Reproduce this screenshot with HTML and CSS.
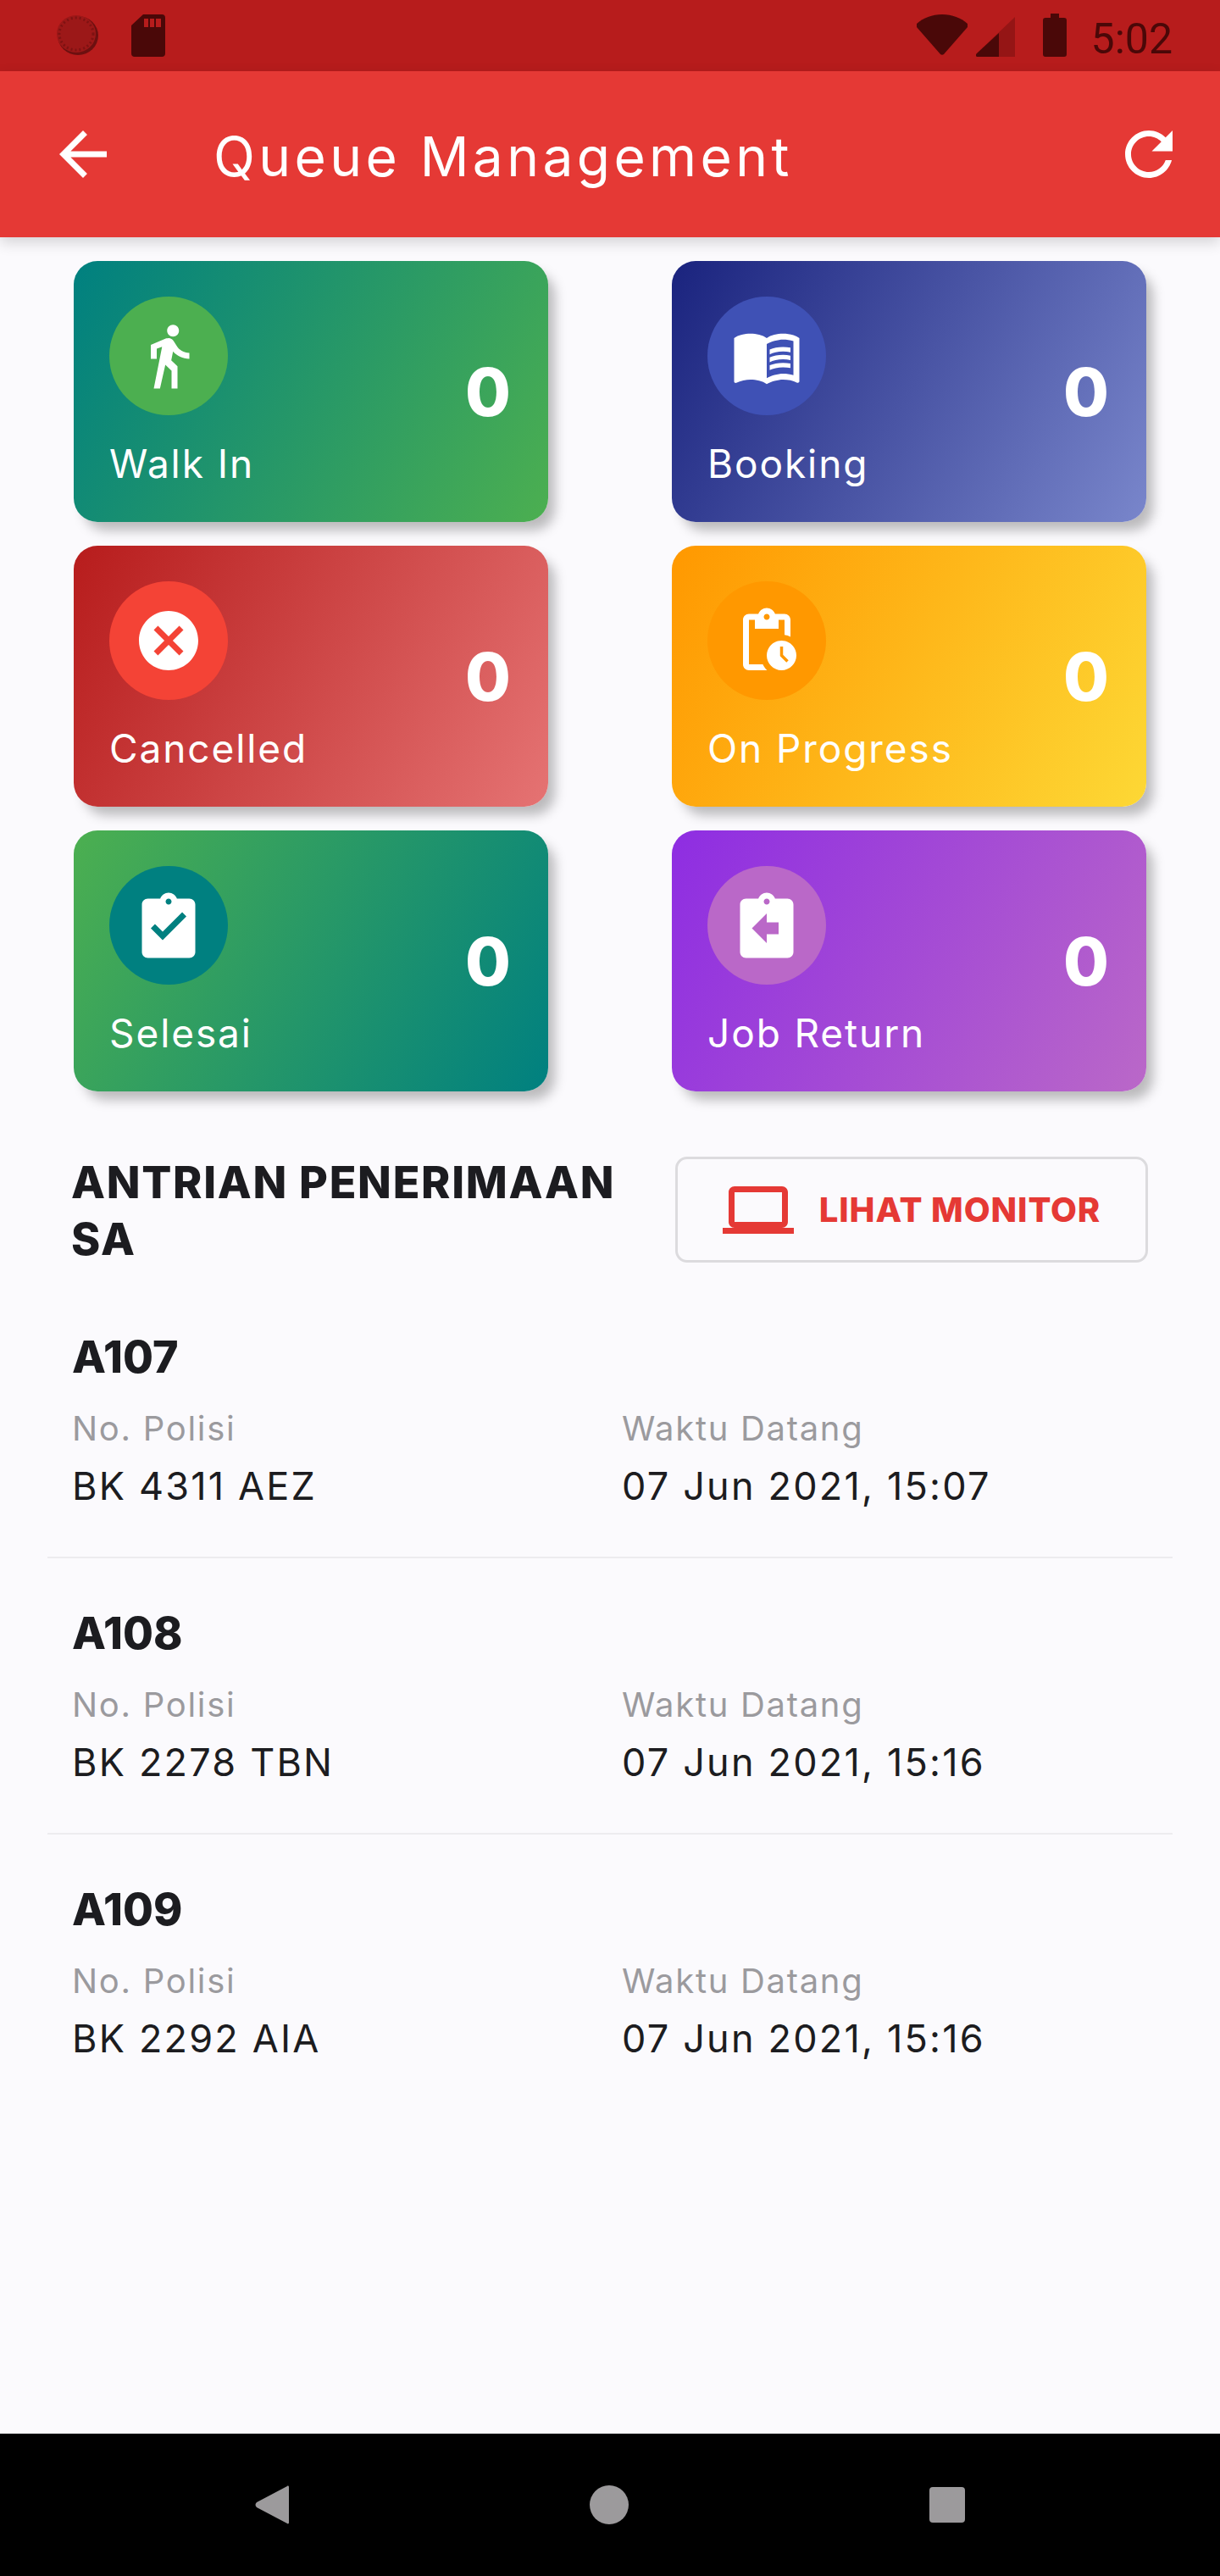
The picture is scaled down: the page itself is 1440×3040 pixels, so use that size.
FILE: index.html
```html
<!DOCTYPE html>
<html lang="en">
<head>
    <meta charset="UTF-8">
    <meta name="viewport" content="width=device-width, initial-scale=1.0">
    <title>Queue Management</title>
    <link rel="stylesheet" href="styles.css">
</head>
<body>
    <div class="screen">
        <div class="status-bar">
            <div class="status-left">
                <svg class="status-dot" viewBox="0 0 50 48"><ellipse cx="26" cy="25" rx="24" ry="23" fill="#6d1010"/><ellipse cx="24" cy="23" rx="23" ry="22" fill="#9c1818"/><ellipse cx="24" cy="23" rx="20" ry="19" fill="none" stroke="#7e1212" stroke-width="3" stroke-dasharray="2 3"/></svg>
                <svg class="status-sd" viewBox="0 0 40 50"><path fill-rule="evenodd" d="M14 0H36a4 4 0 0 1 4 4V46a4 4 0 0 1-4 4H4a4 4 0 0 1-4-4V13ZM15 5V15H20V5ZM22 5V15H27V5ZM29 5V15H35V5Z"/></svg>
            </div>
            <div class="status-right">
                <svg class="status-wifi" viewBox="0 0 60 48"><path d="M30 0C18 0 8 4 0 11c-1 1-1 2 0 4L28 47c1 1 3 1 4 0L60 15c1-2 1-3 0-4C52 4 42 0 30 0Z"/></svg>
                <svg class="status-signal" viewBox="0 0 46 47"><path d="M46 0V47H2c-2 0-3-2-1-4Z" opacity=".3"/><path d="M27 19V47H2c-2 0-3-2-1-4Z"/></svg>
                <svg class="status-battery" viewBox="0 0 28 51"><path d="M9 0H19V5H25a3 3 0 0 1 3 3V48a3 3 0 0 1-3 3H3a3 3 0 0 1-3-3V8a3 3 0 0 1 3-3H9Z"/></svg>
                <span class="status-time">5:02</span>
            </div>
        </div>

        <header class="app-bar">
            <svg class="bar-icon" viewBox="0 0 24 24"><path d="M20 11H7.83l5.59-5.59L12 4l-8 8 8 8 1.41-1.41L7.83 13H20v-2z"/></svg>
            <h1 class="bar-title">Queue Management</h1>
            <svg class="bar-icon" viewBox="0 0 24 24"><path d="M17.65 6.35C16.2 4.9 14.21 4 12 4c-4.42 0-7.99 3.58-7.99 8s3.57 8 7.99 8c3.73 0 6.84-2.55 7.73-6h-2.08c-.82 2.33-3.04 4-5.65 4-3.31 0-6-2.69-6-6s2.69-6 6-6c1.66 0 3.14.69 4.22 1.78L13 11h7V4l-2.35 2.35z"/></svg>
        </header>

        <main class="content">
            <section class="cards">
                <div class="card card-walk">
                    <div class="card-top">
                        <span class="card-circle">
                            <svg class="card-icon" viewBox="0 0 24 24"><path d="M13.5 5.5c1.1 0 2-.9 2-2s-.9-2-2-2-2 .9-2 2 .9 2 2 2zM9.8 8.9L7 23h2.1l1.8-8 2.1 2v6h2v-7.5l-2.1-2 .6-3C14.8 12 16.8 13 19 13v-2c-1.9 0-3.5-1-4.3-2.4l-1-1.6c-.4-.6-1-1-1.7-1-.3 0-.5.1-.8.1L6 8.3V13h2V9.6l1.8-.7"/></svg>
                        </span>
                        <span class="card-count">0</span>
                    </div>
                    <div class="card-label">Walk In</div>
                </div>
                <div class="card card-booking">
                    <div class="card-top">
                        <span class="card-circle">
                            <svg class="card-icon" viewBox="0 0 24 24"><path d="M21 5c-1.11-.35-2.33-.5-3.5-.5-1.95 0-4.05.4-5.5 1.5-1.45-1.1-3.55-1.5-5.5-1.5S2.45 4.9 1 6v14.65c0 .25.25.5.5.5.1 0 .15-.05.25-.05C3.1 20.45 5.05 20 6.5 20c1.95 0 4.05.4 5.5 1.5 1.35-.85 3.8-1.5 5.5-1.5 1.65 0 3.35.3 4.75 1.05.1.05.15.05.25.05.25 0 .5-.25.5-.5V6c-.6-.45-1.25-.75-2-1zm0 13.5c-1.1-.35-2.3-.5-3.5-.5-1.7 0-4.15.65-5.5 1.5V8c1.35-.85 3.8-1.5 5.5-1.5 1.2 0 2.4.15 3.5.5v11.5z"/><path d="M17.5 10.5c.88 0 1.73.09 2.5.26V9.24c-.79-.15-1.64-.24-2.5-.24-1.7 0-3.24.29-4.5.83v1.66c1.13-.64 2.7-.99 4.5-.99zM13 12.49v1.66c1.13-.64 2.7-.99 4.5-.99.88 0 1.73.09 2.5.26V11.9c-.79-.15-1.64-.24-2.5-.24-1.7 0-3.24.3-4.5.83zM17.5 14.33c-1.7 0-3.24.29-4.5.83v1.66c1.13-.64 2.7-.99 4.5-.99.88 0 1.73.09 2.5.26v-1.52c-.79-.16-1.64-.24-2.5-.24z"/></svg>
                        </span>
                        <span class="card-count">0</span>
                    </div>
                    <div class="card-label">Booking</div>
                </div>
                <div class="card card-cancelled">
                    <div class="card-top">
                        <span class="card-circle">
                            <svg class="card-icon" viewBox="0 0 24 24"><path d="M12 2C6.47 2 2 6.47 2 12s4.47 10 10 10 10-4.47 10-10S17.53 2 12 2zm5 13.59L15.59 17 12 13.41 8.41 17 7 15.59 10.59 12 7 8.41 8.41 7 12 10.59 15.59 7 17 8.41 13.41 12 17 15.59z"/></svg>
                        </span>
                        <span class="card-count">0</span>
                    </div>
                    <div class="card-label">Cancelled</div>
                </div>
                <div class="card card-progress">
                    <div class="card-top">
                        <span class="card-circle">
                            <svg class="card-icon" viewBox="0 0 24 24"><path d="M17 12c-2.76 0-5 2.24-5 5s2.24 5 5 5 5-2.24 5-5-2.24-5-5-5zm1.65 7.35L16.5 17.2V14h1v2.79l1.85 1.85-.7.71zM18 3h-3.18C14.4 1.84 13.3 1 12 1s-2.4.84-2.82 2H6c-1.1 0-2 .9-2 2v15c0 1.1.9 2 2 2h6.11c-.59-.57-1.07-1.25-1.42-2H6V5h2v3h8V5h2v5.08c.71.1 1.38.31 2 .6V5c0-1.1-.9-2-2-2zm-6 2c-.55 0-1-.45-1-1s.45-1 1-1 1 .45 1 1-.45 1-1 1z"/></svg>
                        </span>
                        <span class="card-count">0</span>
                    </div>
                    <div class="card-label">On Progress</div>
                </div>
                <div class="card card-done">
                    <div class="card-top">
                        <span class="card-circle">
                            <svg class="card-icon" viewBox="0 0 24 24"><path d="M19 3h-4.18C14.4 1.84 13.3 1 12 1s-2.4.84-2.82 2H5c-1.1 0-2 .9-2 2v16c0 1.1.9 2 2 2h14c1.1 0 2-.9 2-2V5c0-1.1-.9-2-2-2zm-7 0c.55 0 1 .45 1 1s-.45 1-1 1-1-.45-1-1 .45-1 1-1zm-2 14l-4-4 1.41-1.41L10 14.17l6.59-6.59L18 9l-8 8z"/></svg>
                        </span>
                        <span class="card-count">0</span>
                    </div>
                    <div class="card-label">Selesai</div>
                </div>
                <div class="card card-return">
                    <div class="card-top">
                        <span class="card-circle">
                            <svg class="card-icon" viewBox="0 0 24 24"><path d="M19 3h-4.18C14.4 1.84 13.3 1 12 1s-2.4.84-2.82 2H5c-1.1 0-2 .9-2 2v16c0 1.1.9 2 2 2h14c1.1 0 2-.9 2-2V5c0-1.1-.9-2-2-2zm-7 0c.55 0 1 .45 1 1s-.45 1-1 1-1-.45-1-1 .45-1 1-1zm4 12h-4v3l-5-5 5-5v3h4v4z"/></svg>
                        </span>
                        <span class="card-count">0</span>
                    </div>
                    <div class="card-label">Job Return</div>
                </div>
            </section>

            <section class="queue-head">
                <h2 class="queue-title">ANTRIAN PENERIMAAN SA</h2>
                <button class="monitor-btn">
                    <svg class="monitor-icon" viewBox="0 0 24 24"><path d="M20 18c1.1 0 1.99-.9 1.99-2L22 6c0-1.1-.9-2-2-2H4c-1.1 0-2 .9-2 2v10c0 1.1.9 2 2 2H0v2h24v-2h-4zM4 6h16v10H4V6z"/></svg>
                    LIHAT MONITOR
                </button>
            </section>

            <section class="queue-list">
                <div class="queue-item">
                    <div class="queue-no">A107</div>
                    <div class="queue-cols">
                        <div>
                            <div class="queue-label">No. Polisi</div>
                            <div class="queue-value">BK 4311 AEZ</div>
                        </div>
                        <div>
                            <div class="queue-label">Waktu Datang</div>
                            <div class="queue-value">07 Jun 2021, 15:07</div>
                        </div>
                    </div>
                </div>
                <div class="queue-item">
                    <div class="queue-no">A108</div>
                    <div class="queue-cols">
                        <div>
                            <div class="queue-label">No. Polisi</div>
                            <div class="queue-value">BK 2278 TBN</div>
                        </div>
                        <div>
                            <div class="queue-label">Waktu Datang</div>
                            <div class="queue-value">07 Jun 2021, 15:16</div>
                        </div>
                    </div>
                </div>
                <div class="queue-item">
                    <div class="queue-no">A109</div>
                    <div class="queue-cols">
                        <div>
                            <div class="queue-label">No. Polisi</div>
                            <div class="queue-value">BK 2292 AIA</div>
                        </div>
                        <div>
                            <div class="queue-label">Waktu Datang</div>
                            <div class="queue-value">07 Jun 2021, 15:16</div>
                        </div>
                    </div>
                </div>
            </section>
        </main>

        <nav class="nav-bar">
            <svg class="nav-back" viewBox="0 0 40 46"><path d="M38 1c1-1 2 0 2 1V44c0 1-1 2-2 1L2 26c-2-2-2-4 0-6Z"/></svg>
            <span class="nav-home"></span>
            <span class="nav-recent"></span>
        </nav>
    </div>
</body>
</html>
```

FILE: styles.css
```css
* {
    box-sizing: border-box;
}

html, body {
    margin: 0;
    padding: 0;
}

body {
    font-family: Inter, Arial, sans-serif;
    background-color: #fbfafd;
}

.screen {
    width: 1440px;
    height: 3040px;
    display: flex;
    flex-direction: column;
    overflow: hidden;
}

/* status bar */
.status-bar {
    height: 84px;
    flex-shrink: 0;
    background-color: #b71c1c;
    display: flex;
    justify-content: space-between;
    color: #4a0808;
    fill: #4a0808;
}

.status-left {
    display: flex;
    align-items: flex-start;
    padding: 17px 0 0 66px;
}

.status-dot {
    width: 50px;
    height: 48px;
}

.status-sd {
    width: 40px;
    height: 50px;
    margin-left: 39px;
}

.status-right {
    display: flex;
    align-items: flex-start;
    padding: 16px 56px 0 0;
}

.status-wifi {
    width: 60px;
    height: 48px;
    margin-top: 1px;
}

.status-signal {
    width: 46px;
    height: 47px;
    margin: 4px 0 0 10px;
}

.status-battery {
    width: 28px;
    height: 51px;
    margin-left: 33px;
}

.status-time {
    font-family: Roboto, Arial, sans-serif;
    font-size: 50px;
    line-height: 50px;
    margin: 5px 0 0 29px;
}

/* app bar */
.app-bar {
    height: 196px;
    flex-shrink: 0;
    background-color: #e53935;
    color: #fff;
    fill: #fff;
    display: flex;
    align-items: center;
    padding: 0 42px 0 56px;
    box-shadow: 0 6px 16px rgba(0, 0, 0, 0.16);
    position: relative;
}

.bar-icon {
    width: 84px;
    height: 84px;
    flex-shrink: 0;
}

.bar-title {
    flex: 1;
    margin: 4px 0 0 112px;
    font-size: 64px;
    font-weight: 400;
    letter-spacing: 4.4px;
}

/* cards */
.content {
    flex: 1;
}

.cards {
    display: grid;
    grid-template-columns: 560px 560px;
    grid-auto-rows: 308px;
    column-gap: 146px;
    row-gap: 28px;
    padding: 28px 0 0 87px;
}

.card {
    border-radius: 28px;
    padding: 42px 44px 0 42px;
    color: #fff;
    box-shadow: 10px 12px 14px -2px rgba(0, 0, 0, 0.26);
}

.card-top {
    display: flex;
    justify-content: space-between;
    align-items: flex-end;
    height: 140px;
}

.card-circle {
    width: 140px;
    height: 140px;
    border-radius: 50%;
    display: flex;
    align-items: center;
    justify-content: center;
}

.card-icon {
    width: 84px;
    height: 84px;
    fill: #fff;
}

.card-count {
    font-size: 78px;
    font-weight: 800;
    line-height: 78px;
    margin-bottom: -12px;
}

.card-label {
    margin-top: 29px;
    font-size: 46px;
    font-weight: 400;
    line-height: 56px;
    letter-spacing: 1.9px;
}

.card-walk {
    background: linear-gradient(119deg, #008080, #4caf50);
}

.card-walk .card-circle {
    background-color: #4caf50;
}

.card-booking {
    background: linear-gradient(119deg, #1a237e, #7986cb);
}

.card-booking .card-circle {
    background-color: #3f51b5;
}

.card-cancelled {
    background: linear-gradient(119deg, #b71c1c, #e57373);
}

.card-cancelled .card-circle {
    background-color: #f44336;
}

.card-progress {
    background: linear-gradient(119deg, #ff9800, #fdd835);
}

.card-progress .card-circle {
    background-color: #ff9800;
}

.card-done {
    background: linear-gradient(119deg, #4caf50, #008080);
}

.card-done .card-circle {
    background-color: #008080;
}

.card-return {
    background: linear-gradient(119deg, #8e2de2, #ba68c8);
}

.card-return .card-circle {
    background-color: #ba68c8;
}

/* queue */
.queue-head {
    display: flex;
    justify-content: space-between;
    align-items: flex-start;
    padding: 77px 85px 0 84px;
}

.queue-title {
    width: 660px;
    margin: -3px 0 0;
    font-size: 52px;
    font-weight: 800;
    line-height: 67px;
    letter-spacing: 1.7px;
    color: #1c1c20;
}

.monitor-btn {
    width: 558px;
    height: 125px;
    padding: 0;
    background: transparent;
    border: 3px solid #dcdbde;
    border-radius: 14px;
    display: flex;
    align-items: center;
    justify-content: center;
    gap: 30px;
    font-family: inherit;
    font-size: 40px;
    font-weight: 800;
    letter-spacing: 0.9px;
    color: #e53935;
}

.monitor-icon {
    width: 84px;
    height: 84px;
    fill: #e53935;
}

.queue-list {
    padding: 17px 56px 0;
}

.queue-item {
    height: 326px;
    padding: 57px 29px 0;
    border-bottom: 2px solid #edecef;
}

.queue-item:last-child {
    border-bottom: none;
}

.queue-no {
    font-size: 52px;
    font-weight: 800;
    line-height: 64px;
    color: #1c1c20;
}

.queue-cols {
    display: grid;
    grid-template-columns: 649px 1fr;
    margin-top: 26px;
}

.queue-label {
    font-size: 40px;
    font-weight: 400;
    line-height: 52px;
    letter-spacing: 1.7px;
    color: #9b9a9e;
}

.queue-value {
    margin-top: 15px;
    font-size: 45px;
    font-weight: 400;
    line-height: 54px;
    letter-spacing: 2.2px;
    color: #1c1c20;
}

/* nav bar */
.nav-bar {
    height: 168px;
    flex-shrink: 0;
    background-color: #000;
    display: flex;
    align-items: center;
    padding: 0 301px;
    justify-content: space-between;
}

.nav-back {
    width: 40px;
    height: 46px;
    fill: #9c9a9c;
}

.nav-home {
    width: 46px;
    height: 46px;
    border-radius: 50%;
    background-color: #9c9a9c;
}

.nav-recent {
    width: 42px;
    height: 42px;
    border-radius: 4px;
    background-color: #9c9a9c;
}
```
